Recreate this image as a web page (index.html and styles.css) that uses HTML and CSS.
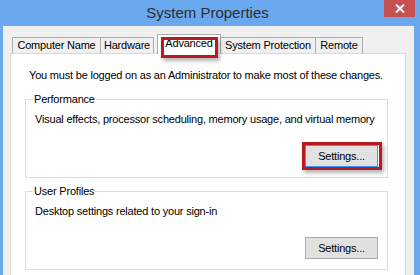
FILE: index.html
```html
<!DOCTYPE html>
<html lang="en">
<head>
    <meta charset="UTF-8">
    <meta name="viewport" content="width=device-width, initial-scale=1.0">
    <title>System Properties</title>
    <link rel="stylesheet" href="styles.css">
</head>
<body>

<div class="window">
    <div class="titlebar">
        <span></span>
        <span class="title">System Properties</span>
        <div class="close">
            <svg width="10" height="9" viewBox="0 0 10 9">
                <path d="M1 0.5 L9 8.5 M9 0.5 L1 8.5" stroke="#fff" stroke-width="2"/>
            </svg>
        </div>
    </div>

    <div class="client">
        <div class="tabs">
            <div class="tab tab-name">Computer Name</div>
            <div class="tab tab-hardware">Hardware</div>
            <div class="tab tab-advanced selected">Advanced</div>
            <div class="tab tab-protection">System Protection</div>
            <div class="tab tab-remote">Remote</div>
        </div>

        <div class="panel">
            <p class="notice">You must be logged on as an Administrator to make most of these changes.</p>

            <fieldset class="group">
                <legend>Performance</legend>
                <p class="group-text">Visual effects, processor scheduling, memory usage, and virtual memory</p>
                <div class="group-actions">
                    <span class="marked-button">
                        <button class="btn default">Settings...</button>
                    </span>
                </div>
            </fieldset>

            <fieldset class="group">
                <legend>User Profiles</legend>
                <p class="group-text">Desktop settings related to your sign-in</p>
                <div class="group-actions">
                    <button class="btn">Settings...</button>
                </div>
            </fieldset>
        </div>
    </div>
</div>

</body>
</html>
```

FILE: styles.css
```css
body {
    margin: 0;
    background-color: #6aa8f0;
    font-family: "Liberation Sans", Arial, sans-serif;
    font-size: 11px;
    letter-spacing: -0.2px;
    color: #000;
}

.window {
    width: 420px;
    height: 275px;
    display: flex;
    flex-direction: column;
    overflow: hidden;
}

.titlebar {
    height: 26px;
    flex-shrink: 0;
    display: grid;
    grid-template-columns: 1fr auto 1fr;
    padding-right: 5px;
}

.title {
    font-size: 15px;
    letter-spacing: 0;
    line-height: 25px;
    color: #2d2d2d;
}

.close {
    justify-self: end;
    width: 31px;
    height: 17px;
    background-color: #c75050;
    display: flex;
    align-items: center;
    justify-content: center;
}

.client {
    flex: 1;
    margin: 0 6px 0 3px;
    background-color: #f0f0f0;
    display: flex;
    flex-direction: column;
}

.tabs {
    height: 27px;
    flex-shrink: 0;
    display: flex;
    align-items: flex-end;
    padding-left: 9px;
}

.tab {
    box-sizing: border-box;
    height: 16px;
    border: 1px solid #acacac;
    border-bottom: none;
    background-color: #f0f0f0;
    text-align: center;
    line-height: 15px;
    white-space: nowrap;
}

.tab-name {
    width: 89px;
}

.tab-hardware {
    width: 54px;
    margin-left: -1px;
}

.tab-advanced {
    width: 64px;
    margin-left: 3px;
}

.tab-protection {
    width: 96px;
    margin-left: -1px;
}

.tab-remote {
    width: 48px;
    margin-left: -1px;
}

.tab.selected {
    position: relative;
    z-index: 1;
    height: 20px;
    margin-bottom: -1px;
    background-color: #fff;
    line-height: 17px;
}

/* red annotation frame around the Advanced tab */
.tab.selected::after {
    content: "";
    position: absolute;
    left: 3px;
    right: 2px;
    top: 2px;
    bottom: -4px;
    border: 3px solid #b81a22;
    box-shadow: 2px 3px 4px rgba(0, 0, 0, 0.3);
}

.panel {
    flex: 1;
    margin: 0 8px -20px 7px;
    padding: 0 17px 0 14px;
    border: 1px solid #d9d9d9;
    background-color: #fff;
}

.notice {
    margin: 14px 0 9px 4px;
    line-height: 15px;
    white-space: nowrap;
}

.group {
    min-width: 0;
    margin: 0 0 6px 0;
    padding: 0 9px 10px 9px;
    border: 1px solid #dcdcdc;
}

.group legend {
    margin-left: -2px;
    padding: 0 1px;
    line-height: 15px;
}

.group-text {
    margin: 5px 0 0 0;
    line-height: 15px;
    white-space: nowrap;
}

.group-actions {
    display: flex;
    justify-content: flex-end;
    margin-top: 18px;
}

.btn {
    box-sizing: border-box;
    width: 73px;
    height: 22px;
    padding: 0;
    border: 1px solid #adadad;
    background-color: #e1e1e1;
    font-family: inherit;
    font-size: 11px;
    letter-spacing: -0.2px;
    color: #000;
    display: block;
}

.btn.default {
    border-color: #3399ff;
}

.marked-button {
    position: relative;
}

/* red annotation frame around the first Settings button */
.marked-button::after {
    content: "";
    position: absolute;
    left: -3px;
    right: -4px;
    top: -3px;
    bottom: -3px;
    border: 3px solid #b81a22;
    box-shadow: 2px 3px 4px rgba(0, 0, 0, 0.3);
}
```
